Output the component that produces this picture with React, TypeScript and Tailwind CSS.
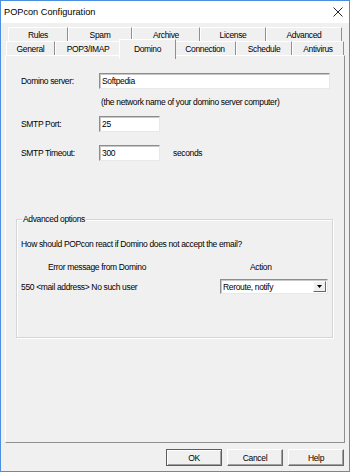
export default function App() {
  const backTabs = [
    { label: "Rules", w: "w-[60px]" },
    { label: "Spam", w: "w-[64px]" },
    { label: "Archive", w: "w-[68px]" },
    { label: "License", w: "w-[66px]" },
    { label: "Advanced", w: "w-[76px]" },
  ];
  const frontTabs = [
    { label: "General", w: "w-[49px]" },
    { label: "POP3/IMAP", w: "w-[66px]" },
    { label: "Domino", w: "w-[51px]", active: true },
    { label: "Connection", w: "w-[62px]" },
    { label: "Schedule", w: "w-[56px]" },
    { label: "Antivirus", w: "w-[52px]" },
  ];

  const sunken =
    "bg-white border border-t-[#8d8d8d] border-l-[#8d8d8d] border-b-[#e8e8e8] border-r-[#e8e8e8] shadow-[inset_1px_1px_0_#c8c8c8]";

  return (
    <div className="w-[350px] h-[472px] flex flex-col border border-[#4a8fe0] bg-[#f0f0f0] font-['Liberation_Sans',Arial,sans-serif] text-[8.5px] leading-[10px] text-black overflow-hidden">
      {/* Title bar */}
      <div className="h-[22px] bg-white flex items-center justify-between pl-[3px] pr-[6px]">
        <span className="text-[9.2px] text-black">POPcon Configuration</span>
        <svg width="10" height="10" viewBox="0 0 10 10">
          <path d="M0.5 0.5L9.5 9.5M9.5 0.5L0.5 9.5" stroke="#222" strokeWidth="1" />
        </svg>
      </div>

      <div className="flex-1 flex flex-col pt-[4px] tracking-[-0.35px]">
        {/* back row of tabs */}
        <div className="flex ml-[7px] h-[14px]">
          {backTabs.map((t) => (
            <div
              key={t.label}
              className={`${t.w} h-[14px] flex items-center justify-center border-t border-l border-t-white border-l-white border-r border-r-[#8f8f8f]`}
            >
              {t.label}
            </div>
          ))}
        </div>
        {/* front row of tabs */}
        <div className="flex ml-[5px] h-[14px]">
          {frontTabs.map((t) =>
            t.active ? (
              <div
                key={t.label}
                className={`${t.w} relative z-10 h-[17px] -mt-[2px] -mx-[2px] px-[2px] box-content flex items-center justify-center pb-[2px] bg-[#f0f0f0] border-t border-l border-t-white border-l-white border-r border-r-[#8f8f8f]`}
              >
                {t.label}
              </div>
            ) : (
              <div
                key={t.label}
                className={`${t.w} h-[14px] flex items-center justify-center border-t border-l border-t-white border-l-white border-r border-r-[#8f8f8f]`}
              >
                {t.label}
              </div>
            )
          )}
        </div>

        {/* Tab panel */}
        <div className="ml-[4px] w-[340px] h-[388px] border border-t-white border-l-white border-r-[#8f8f8f] border-b-[#8f8f8f] flex flex-col pl-[15px] pt-[17px]">
          <div className="flex items-center h-[16px]">
            <span className="w-[78px]">Domino server:</span>
            <div className={`w-[231px] h-[16px] ${sunken} flex items-center pl-[2px]`}>Softpedia</div>
          </div>
          <div className="mt-[8px] ml-[80px]">(the network name of your domino server computer)</div>

          <div className="flex items-center h-[16px] mt-[9px]">
            <span className="w-[78px]">SMTP Port:</span>
            <div className={`w-[61px] h-[16px] ${sunken} flex items-center pl-[2px]`}>25</div>
          </div>

          <div className="flex items-center h-[16px] mt-[13px]">
            <span className="w-[78px]">SMTP Timeout:</span>
            <div className={`w-[61px] h-[16px] ${sunken} flex items-center pl-[2px]`}>300</div>
            <span className="ml-[13px]">seconds</span>
          </div>

          {/* Advanced options group */}
          <div className="relative mt-[58px] -ml-[5px] w-[317px] h-[119px] border border-[#d5d5d5] shadow-[inset_1px_1px_0_#ffffff,1px_1px_0_#ffffff] pl-[4px] pt-[19px]">
            <span className="absolute -top-[6px] left-[5px] px-[1px] bg-[#f0f0f0]">Advanced options</span>
            <div>How should POPcon react if Domino does not accept the email?</div>
            <div className="flex mt-[13px]">
              <span className="w-[199px] pl-[27px]">Error message from Domino</span>
              <span className="pl-[30px]">Action</span>
            </div>
            <div className="flex items-center mt-[7px]">
              <span className="w-[199px]">550 &lt;mail address&gt; No such user</span>
              <div className={`w-[108px] h-[15px] ${sunken} flex items-center justify-between pl-[2px] pr-[1px]`}>
                <span>Reroute, notify</span>
                <div className="w-[13px] h-[11px] bg-[#f0f0f0] border border-t-white border-l-white border-r-[#696969] border-b-[#696969] flex items-center justify-center">
                  <svg width="5" height="3" viewBox="0 0 5 3">
                    <path d="M0 0H5L2.5 3Z" fill="#000" />
                  </svg>
                </div>
              </div>
            </div>
          </div>
        </div>

        {/* Buttons */}
        <div className="flex justify-end gap-[5px] pr-[5px] mt-[6px]">
          <button className="w-[56px] h-[17px] bg-[#f0f0f0] border border-[#5c5c5c] shadow-[inset_1px_1px_0_#ffffff,inset_-1px_-1px_0_#a0a0a0] text-[8.5px] leading-[10px]">
            OK
          </button>
          <button className="w-[56px] h-[17px] bg-[#f0f0f0] border border-t-white border-l-white border-r-[#696969] border-b-[#696969] shadow-[inset_-1px_-1px_0_#a0a0a0] text-[8.5px] leading-[10px]">
            Cancel
          </button>
          <button className="w-[56px] h-[17px] bg-[#f0f0f0] border border-t-white border-l-white border-r-[#696969] border-b-[#696969] shadow-[inset_-1px_-1px_0_#a0a0a0] text-[8.5px] leading-[10px]">
            Help
          </button>
        </div>
      </div>
    </div>
  );
}
